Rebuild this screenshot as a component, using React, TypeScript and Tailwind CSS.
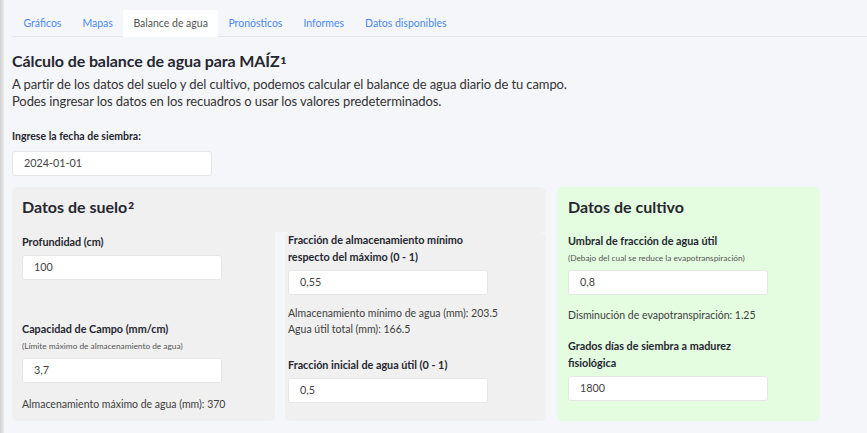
import React from "react";

const font = { fontFamily: "Lato, 'Open Sans', sans-serif" };

function Field({ label, sub, value, note, noteGap = "mt-[13px]" }: { label: React.ReactNode; sub?: string; value: string; note?: React.ReactNode; noteGap?: string }) {
  return (
    <div>
      <div className="text-[10.8px] font-bold text-[#262730] leading-[17px]">{label}</div>
      {sub && <div className="text-[8.3px] text-[#555] leading-[14px] mt-[2px]">{sub}</div>}
      <div className="w-[200px] h-[25px] mt-[5px] bg-white border border-[#e6e6e6] rounded-[3px] flex items-center px-[11px] text-[10.8px] text-[#444]">{value}</div>
      {note && <div className={`${noteGap} text-[10.5px] text-[#3d3d3d] leading-[16px]`}>{note}</div>}
    </div>
  );
}

export default function App() {
  const tabs = ["Gráficos", "Mapas", "Balance de agua", "Pronósticos", "Informes", "Datos disponibles"];
  return (
    <div style={font} className="w-[867px] h-[433px] overflow-hidden bg-[#f5f6fa] flex">
      <div className="w-[4px] bg-gradient-to-r from-[#cfcfcf] to-[#ececec] shrink-0" />
      <div className="flex-1 pl-[8px]">
        <div className="h-[37px] pt-[10px] flex border-b border-[#e4e5ea] pl-[1px]">
          {tabs.map((t) => (
            <div
              key={t}
              className={
                t === "Balance de agua"
                  ? "h-[27px] px-[10px] bg-white text-[#555] text-[10.5px] flex items-center -mb-px"
                  : "h-[27px] px-[10.5px] text-[#4a8af4] text-[10.5px] flex items-center"
              }
            >
              {t}
            </div>
          ))}
        </div>
        <h1 className="mt-[13px] text-[16px] tracking-[-0.1px] font-bold text-[#262730] leading-[22px]">
          Cálculo de balance de agua para MAÍZ<span className="text-[10px] font-extrabold align-top relative top-[-1px] ml-[1px]">1</span>
        </h1>
        <p className="mt-[4px] text-[13px] tracking-[-0.1px] text-[#333] leading-[16.5px]">
          A partir de los datos del suelo y del cultivo, podemos calcular el balance de agua diario de tu campo.
          <br />
          Podes ingresar los datos en los recuadros o usar los valores predeterminados.
        </p>
        <div className="mt-[20px] text-[10.5px] font-bold text-[#262730]">Ingrese la fecha de siembra:</div>
        <div className="mt-[6px] w-[200px] h-[25px] bg-white border border-[#e6e6e6] rounded-[3px] flex items-center px-[11px] text-[10.8px] text-[#444]">2024-01-01</div>
        <div className="mt-[11px] flex gap-[11px]">
          <div className="w-[534px] flex flex-col">
            <div className="h-[45px] bg-[#f0f0f0] rounded-t-[6px] px-[10px] pt-[9px] text-[16px] font-bold text-[#262730] leading-[22px]">
              Datos de suelo<span className="text-[10px] font-extrabold align-top relative top-[-2px] ml-[1px]">2</span>
            </div>
            <div className="flex gap-[10px] h-[189px]">
              <div className="w-[263px] bg-[#f0f0f0] rounded-b-[6px] px-[10px] pt-[1px]">
                <Field label="Profundidad (cm)" value="100" />
                <div className="h-[40px]" />
                <Field label="Capacidad de Campo (mm/cm)" sub="(Límite máximo de almacenamiento de agua)" value="3,7" note="Almacenamiento máximo de agua (mm): 370" noteGap="mt-[13px]" />
              </div>
              <div className="flex-1 bg-[#f0f0f0] rounded-[6px] px-[3px]">
                <div className="-mt-[1px]">
                  <Field label={<>Fracción de almacenamiento mínimo<br />respecto del máximo (0 - 1)</>} value="0,55" note={<>Almacenamiento mínimo de agua (mm): 203.5<br />Agua útil total (mm): 166.5</>} noteGap="mt-[10px]" />
                  <div className="h-[19px]" />
                  <Field label="Fracción inicial de agua útil (0 - 1)" value="0,5" />
                </div>
              </div>
            </div>
          </div>
          <div className="w-[263px] flex flex-col">
            <div className="h-[45px] bg-[#e4fde1] rounded-t-[6px] px-[11px] pt-[9px] text-[16px] font-bold text-[#262730] leading-[22px]">Datos de cultivo</div>
            <div className="h-[189px] bg-[#e4fde1] rounded-b-[6px] px-[11px]">
              <Field label="Umbral de fracción de agua útil" sub="(Debajo del cual se reduce la evapotranspiración)" value="0,8" note="Disminución de evapotranspiración: 1.25" noteGap="mt-[12px]" />
              <div className="h-[14px]" />
              <Field label={<>Grados días de siembra a madurez<br />fisiológica</>} value="1800" />
            </div>
          </div>
        </div>
      </div>
    </div>
  );
}
